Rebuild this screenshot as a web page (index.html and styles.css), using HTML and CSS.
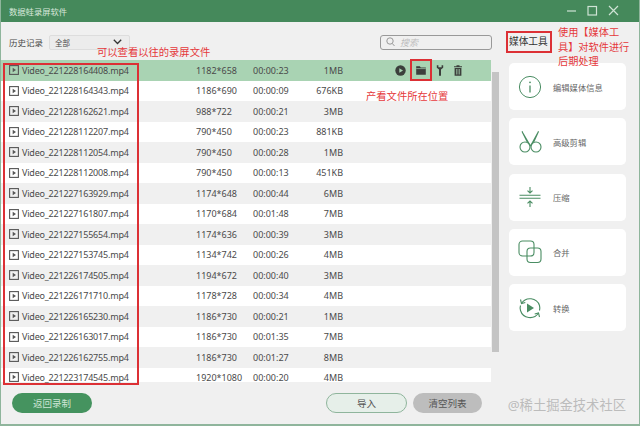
FILE: index.html
```html
<!DOCTYPE html>
<html lang="en">
<head>
    <meta charset="UTF-8">
    <title>数据蛙录屏软件</title>
    <link rel="stylesheet" href="styles.css">
</head>
<body>
    <svg class="sprites" width="0" height="0">
        <symbol id="file-icon" viewBox="0 0 10 10">
            <rect x="0.6" y="0.6" width="8.8" height="8.8" fill="none" stroke="#555" stroke-width="1.1"/>
            <path d="M3.7 2.8 7 5 3.7 7.2z" fill="#555"/>
        </symbol>
    </svg>
    <div class="window">
        <header class="titlebar">
            <span class="title">数据蛙录屏软件</span>
            <div class="win-buttons">
                <svg width="60" height="14" viewBox="0 0 60 14" fill="none" stroke="#cfe3d5" stroke-width="1.2">
                    <path d="M1 7h9"/>
                    <rect x="22" y="2.5" width="8.5" height="8.5"/>
                    <path d="M43 2l9 9M52 2l-9 9"/>
                </svg>
            </div>
        </header>

        <div class="content">
            <section class="main">
                <div class="toolbar">
                    <label class="history-label">历史记录</label>
                    <div class="select">全部
                        <svg width="9" height="6" viewBox="0 0 9 6" fill="none" stroke="#333" stroke-width="1.3"><path d="M0.8 0.8 4.5 4.5 8.2 0.8"/></svg>
                    </div>
                    <div class="search">
                        <svg width="9" height="10" viewBox="0 0 9 10" fill="none" stroke="#999" stroke-width="1"><circle cx="4" cy="4" r="3.2"/><path d="M6.3 6.5 8.5 9"/></svg>
                        <span>搜索</span>
                    </div>
                </div>

                <div class="list-wrap">
                    <div class="list">
                        <div class="row selected">
                            <svg class="file"><use href="#file-icon"/></svg>
                            <span class="name">Video_221228164408.mp4</span><span class="res">1182*658</span><span class="dur">00:00:23</span><span class="size">1MB</span>
                            <div class="actions">
                                <svg width="11" height="11" viewBox="0 0 11 11"><circle cx="5.5" cy="5.5" r="5.2" fill="#3c3f3c"/><path d="M4.3 3.2 8 5.5 4.3 7.8z" fill="#a9d3b3"/></svg>
                                <svg width="10" height="9" viewBox="0 0 10 9"><path d="M0.2 0.3h3.6l1 1.2h5v7.2H0.2z" fill="#3c3f3c"/><path d="M0.2 2.6h9.6" stroke="#a9d3b3" stroke-width="0.7"/></svg>
                                <svg width="8" height="11" viewBox="0 0 8 11"><path d="M0.8 0.3v2.5L3 4.6V10.7H5V4.6L7.2 2.8V0.3L5.6 0.3V2.2H2.4V0.3z" fill="#3c3f3c"/></svg>
                                <svg width="8" height="11" viewBox="0 0 8 11"><path d="M0 1.3h8v1H0zM2.5 0.2h3v1h-3zM0.6 3h6.8v7.8H0.6z" fill="#3c3f3c"/><path d="M2.5 4v5.5M4 4v5.5M5.5 4v5.5" stroke="#a9d3b3" stroke-width="0.6"/></svg>
                            </div>
                        </div>
                        <div class="row"><svg class="file"><use href="#file-icon"/></svg><span class="name">Video_221228164343.mp4</span><span class="res">1186*690</span><span class="dur">00:00:09</span><span class="size">676KB</span></div>
                        <div class="row"><svg class="file"><use href="#file-icon"/></svg><span class="name">Video_221228162621.mp4</span><span class="res">988*722</span><span class="dur">00:00:21</span><span class="size">3MB</span></div>
                        <div class="row"><svg class="file"><use href="#file-icon"/></svg><span class="name">Video_221228112207.mp4</span><span class="res">790*450</span><span class="dur">00:00:23</span><span class="size">881KB</span></div>
                        <div class="row"><svg class="file"><use href="#file-icon"/></svg><span class="name">Video_221228112054.mp4</span><span class="res">790*450</span><span class="dur">00:00:28</span><span class="size">1MB</span></div>
                        <div class="row"><svg class="file"><use href="#file-icon"/></svg><span class="name">Video_221228112008.mp4</span><span class="res">790*450</span><span class="dur">00:00:13</span><span class="size">451KB</span></div>
                        <div class="row"><svg class="file"><use href="#file-icon"/></svg><span class="name">Video_221227163929.mp4</span><span class="res">1174*648</span><span class="dur">00:00:44</span><span class="size">6MB</span></div>
                        <div class="row"><svg class="file"><use href="#file-icon"/></svg><span class="name">Video_221227161807.mp4</span><span class="res">1170*684</span><span class="dur">00:01:48</span><span class="size">7MB</span></div>
                        <div class="row"><svg class="file"><use href="#file-icon"/></svg><span class="name">Video_221227155654.mp4</span><span class="res">1174*636</span><span class="dur">00:00:39</span><span class="size">3MB</span></div>
                        <div class="row"><svg class="file"><use href="#file-icon"/></svg><span class="name">Video_221227153745.mp4</span><span class="res">1134*742</span><span class="dur">00:00:26</span><span class="size">4MB</span></div>
                        <div class="row"><svg class="file"><use href="#file-icon"/></svg><span class="name">Video_221226174505.mp4</span><span class="res">1194*672</span><span class="dur">00:00:40</span><span class="size">3MB</span></div>
                        <div class="row"><svg class="file"><use href="#file-icon"/></svg><span class="name">Video_221226171710.mp4</span><span class="res">1178*728</span><span class="dur">00:00:34</span><span class="size">4MB</span></div>
                        <div class="row"><svg class="file"><use href="#file-icon"/></svg><span class="name">Video_221226165230.mp4</span><span class="res">1186*730</span><span class="dur">00:00:21</span><span class="size">1MB</span></div>
                        <div class="row"><svg class="file"><use href="#file-icon"/></svg><span class="name">Video_221226163017.mp4</span><span class="res">1186*730</span><span class="dur">00:01:35</span><span class="size">7MB</span></div>
                        <div class="row"><svg class="file"><use href="#file-icon"/></svg><span class="name">Video_221226162755.mp4</span><span class="res">1186*730</span><span class="dur">00:01:27</span><span class="size">8MB</span></div>
                        <div class="row"><svg class="file"><use href="#file-icon"/></svg><span class="name">Video_221223174545.mp4</span><span class="res">1920*1080</span><span class="dur">00:00:20</span><span class="size">4MB</span></div>
                    </div>
                    <div class="scrollbar"><div class="thumb"></div></div>
                </div>

                <div class="bottom">
                    <button class="btn btn-back">返回录制</button>
                    <button class="btn btn-import">导入</button>
                    <button class="btn btn-clear">清空列表</button>
                </div>
            </section>

            <aside class="side">
                <h2 class="side-title">媒体工具</h2>
                <div class="tool">
                    <svg width="24" height="24" viewBox="0 0 24 24" fill="none" stroke="#4a8d63" stroke-width="1"><circle cx="12" cy="12" r="10.6"/><path d="M12 10.5v7" stroke-width="1.3"/><circle cx="12" cy="7.3" r="0.9" fill="#4a8d63" stroke="none"/></svg>
                    <span>编辑媒体信息</span>
                </div>
                <div class="tool">
                    <svg width="24" height="24" viewBox="0 0 24 24" fill="none" stroke="#4a8d63" stroke-width="1.1"><circle cx="7" cy="17" r="5"/><circle cx="18" cy="17" r="5"/><path d="M4 1.5 9.5 12.5M20.5 1.5 15.5 12.5M4 1.5 12.5 16M20.5 1.5 12.5 16"/></svg>
                    <span>高级剪辑</span>
                </div>
                <div class="tool">
                    <svg width="24" height="24" viewBox="0 0 24 24" fill="none" stroke="#4a8d63" stroke-width="1.1"><path d="M1.5 10.2h21M1.5 13.2h21"/><path d="M12 2v6M9.5 5.6 12 8l2.5-2.4M12 22v-6M9.5 18.4 12 16l2.5 2.4"/></svg>
                    <span>压缩</span>
                </div>
                <div class="tool">
                    <svg width="24" height="24" viewBox="0 0 24 24" fill="none" stroke="#4a8d63" stroke-width="1.1"><rect x="1" y="1" width="15" height="15" rx="3.5"/><rect x="9" y="8" width="14" height="14.5" rx="3.5"/></svg>
                    <span>合并</span>
                </div>
                <div class="tool">
                    <svg width="24" height="24" viewBox="0 0 24 24" fill="none" stroke="#4a8d63" stroke-width="1.1"><path d="M3.5 7.5A10 10 0 0 1 21.5 9.5c.5 2 .4 3.5 0 5M20.5 17A10 10 0 0 1 2.5 14.5C2 12.8 2 11 2.5 9.5"/><path d="M2.5 3.5 3.5 7.5l3.8-1M21.5 21l-1-4-3.8 1"/><path d="M9 7.5 16 12 9 16.5z" fill="#4a8d63" stroke="none"/></svg>
                    <span>转换</span>
                </div>
            </aside>
        </div>

        <!-- red notes drawn over the screenshot -->
        <div class="mark mark-list"></div>
        <div class="mark mark-folder"></div>
        <div class="mark mark-title"></div>
        <p class="note note-list">可以查看以往的录屏文件</p>
        <p class="note note-folder">产看文件所在位置</p>
        <p class="note note-tools">使用【媒体工<br>具】对软件进行<br>后期处理</p>
        <div class="watermark">@稀土掘金技术社区</div>
    </div>
</body>
</html>
```

FILE: styles.css
```css
* {
    box-sizing: border-box;
}

body {
    margin: 0;
    font-family: "Noto Sans", "Noto Sans CJK SC", sans-serif;
    color: #4a4a4a;
    background-color: #f0f0f0;
}

.sprites {
    position: absolute;
}

.window {
    position: relative;
    width: 640px;
    height: 426px;
    overflow: hidden;
    background-color: #f0f0f0;
    border-right: 1px solid #8fb59c;
    border-bottom: 2px solid #8fb59c;
    border-left: 1px solid #8fb59c;
}

.titlebar {
    display: flex;
    align-items: center;
    justify-content: space-between;
    height: 22px;
    margin: 0 -1px;
    padding: 0 14px 0 9px;
    background-color: #45895b;
    color: #d8e8dc;
    font-size: 8.3px;
}

.win-buttons {
    display: flex;
}

.content {
    display: flex;
    height: 402px;
}

.main {
    width: 498px;
}

.toolbar {
    display: flex;
    align-items: center;
    height: 38px;
    padding: 2px 7px 0 8px;
}

.history-label {
    width: 40px;
    font-size: 8.5px;
}

.select {
    display: flex;
    align-items: center;
    justify-content: space-between;
    width: 81px;
    height: 15px;
    padding: 0 7px 0 5px;
    background-color: #ececec;
    border: 1px solid #ddd;
    border-radius: 2px;
    font-size: 7.5px;
}

.search {
    display: flex;
    align-items: center;
    gap: 5px;
    width: 112px;
    height: 15px;
    margin-left: auto;
    padding-left: 5px;
    border: 1px solid #999;
    border-radius: 3px;
    color: #bbb;
    font-size: 9px;
    font-style: italic;
}

.list-wrap {
    display: flex;
    height: 322px;
}

.list {
    width: 490px;
}

.row {
    display: flex;
    align-items: center;
    height: 20.5px;
    padding-left: 8px;
    background-color: #f0f0f0;
    font-size: 9px;
    line-height: 9px;
    white-space: nowrap;
}

.row:nth-child(even) {
    background-color: #fff;
}

.row:last-child {
    height: 14.5px;
    padding-top: 5px;
}

.row.selected {
    background-color: #a9d3b3;
}

.file {
    flex: none;
    width: 10px;
    height: 10px;
}

.name {
    width: 174px;
    margin-left: 3px;
    letter-spacing: -0.2px;
}

.res {
    width: 57px;
}

.dur {
    width: 48px;
}

.size {
    width: 42px;
    text-align: right;
}

.actions {
    display: flex;
    align-items: center;
    gap: 10px;
    margin-left: 52px;
}

.scrollbar {
    width: 7px;
    margin-left: 1px;
    background-color: #f0f0f0;
}

.thumb {
    height: 280px;
    margin-top: 12px;
    background-color: #c4c4c4;
}

.bottom {
    display: flex;
    align-items: center;
    height: 42px;
    padding: 0 0 0 11px;
}

.btn {
    height: 20px;
    padding: 0;
    border: none;
    border-radius: 10px;
    font-family: inherit;
    font-size: 9.5px;
}

.btn-back {
    width: 80px;
    background-color: #45935f;
    color: #cfe6d6;
}

.btn-import {
    width: 81px;
    margin-left: 234px;
    background-color: #e6efe9;
    border: 1px solid #8fb59c;
    color: #555;
}

.btn-clear {
    width: 69px;
    margin-left: 6px;
    background-color: #bdbdbd;
    color: #555;
}

.side {
    flex: 1;
    padding: 8px 13px 0 10px;
}

.side-title {
    height: 23px;
    margin: 0 0 10px;
    line-height: 24px;
    font-size: 9.7px;
    font-weight: normal;
    color: #333;
}

.tool {
    display: flex;
    align-items: center;
    gap: 11px;
    height: 47px;
    margin-bottom: 8.3px;
    padding-left: 9px;
    background-color: #fff;
    border-radius: 5px;
    font-size: 8.3px;
    color: #666;
}

.tool svg {
    flex: none;
}

.mark {
    position: absolute;
    border: 2px solid #dc3035;
}

.mark-list {
    left: 2px;
    top: 63px;
    width: 136px;
    height: 322px;
}

.mark-folder {
    left: 409px;
    top: 59px;
    width: 22px;
    height: 22px;
}

.mark-title {
    left: 505px;
    top: 31px;
    width: 46px;
    height: 22px;
}

.note {
    position: absolute;
    margin: 0;
    color: #e5383b;
    white-space: nowrap;
}

.note-list {
    left: 96px;
    top: 44px;
    font-size: 10.3px;
}

.note-folder {
    left: 365px;
    top: 88px;
    font-size: 10.3px;
}

.note-tools {
    left: 557px;
    top: 25px;
    font-size: 10.2px;
    line-height: 14.5px;
}

.watermark {
    position: absolute;
    right: 13px;
    top: 395px;
    color: #bcbcbc;
    font-size: 13.3px;
}
```
